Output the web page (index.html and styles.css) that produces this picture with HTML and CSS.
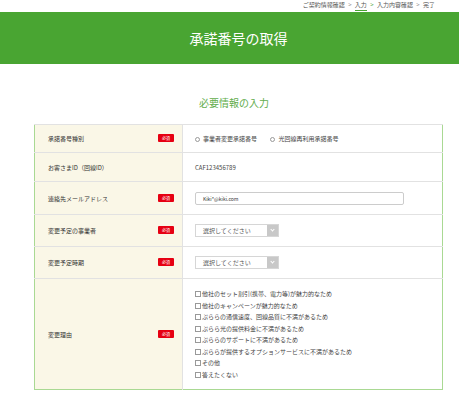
FILE: index.html
```html
<!DOCTYPE html>
<html lang="ja">
<head>
    <meta charset="UTF-8">
    <meta name="viewport" content="width=device-width, initial-scale=1.0">
    <title>承諾番号の取得</title>
    <link rel="stylesheet" href="styles.css">
</head>
<body>
    <div class="breadcrumb">
        <span>ご契約情報確認</span>
        <span class="sep">&gt;</span>
        <span class="current">入力</span>
        <span class="sep green">&gt;</span>
        <span>入力内容確認</span>
        <span class="sep">&gt;</span>
        <span>完了</span>
    </div>
    <div class="page-header">
        <h1>承諾番号の取得</h1>
    </div>
    <h2 class="section-title">必要情報の入力</h2>

    <table class="form-table">
        <tr class="row-type">
            <th><span class="label">承諾番号種別</span><span class="required">必須</span></th>
            <td>
                <span class="radio"><i></i>事業者変更承諾番号</span>
                <span class="radio"><i></i>光回線再利用承諾番号</span>
            </td>
        </tr>
        <tr class="row-id">
            <th><span class="label">お客さまID（回線ID）</span></th>
            <td>CAF123456789</td>
        </tr>
        <tr class="row-mail">
            <th><span class="label">連絡先メールアドレス</span><span class="required">必須</span></th>
            <td><div class="text-input">Kiki*@kiki.com</div></td>
        </tr>
        <tr class="row-select">
            <th><span class="label">変更予定の事業者</span><span class="required">必須</span></th>
            <td><div class="select">選択してください<span class="arrow"></span></div></td>
        </tr>
        <tr class="row-select">
            <th><span class="label">変更予定時期</span><span class="required">必須</span></th>
            <td><div class="select">選択してください<span class="arrow"></span></div></td>
        </tr>
        <tr class="row-reason">
            <th><span class="label">変更理由</span><span class="required">必須</span></th>
            <td>
                <ul class="checks">
                    <li><i></i>他社のセット割引(携帯、電力等)が魅力的なため</li>
                    <li><i></i>他社のキャンペーンが魅力的なため</li>
                    <li><i></i>ぷららの通信速度、回線品質に不満があるため</li>
                    <li><i></i>ぷらら光の提供料金に不満があるため</li>
                    <li><i></i>ぷららのサポートに不満があるため</li>
                    <li><i></i>ぷららが提供するオプションサービスに不満があるため</li>
                    <li><i></i>その他</li>
                    <li><i></i>答えたくない</li>
                </ul>
            </td>
        </tr>
    </table>
</body>
</html>
```

FILE: styles.css
```css
body {
    margin: 0;
    overflow: hidden;
    background: #fff;
    color: #444;
    font-family: "Noto Sans CJK JP", "Noto Sans", sans-serif;
}
.breadcrumb {
    height: 12px;
    padding-right: 24px;
    text-align: right;
    font-size: 6px;
    line-height: 9px;
    color: #555;
}
.breadcrumb .sep {
    margin: 0 2px;
    color: #888;
}
.breadcrumb .sep.green {
    color: #49a532;
}
.breadcrumb .current {
    border-bottom: 1px solid #49a532;
    padding-bottom: 1px;
}
.page-header {
    height: 52px;
    padding-left: 18px;
    background: #49a532;
    display: flex;
    align-items: center;
    justify-content: center;
}
.page-header h1 {
    margin: 0;
    color: #fff;
    font-size: 14px;
    font-weight: normal;
}
.section-title {
    margin: 32px 0 14px;
    padding-left: 9px;
    text-align: center;
    font-size: 10px;
    line-height: 14px;
    font-weight: normal;
    color: #62ad4c;
}
.form-table {
    width: 409px;
    margin: 0 0 0 34px;
    border-collapse: collapse;
    border: 1px solid #a9d993;
    font-size: 6px;
}
.form-table th,
.form-table td {
    padding: 0;
    border-top: 1px solid #e2e2e2;
    vertical-align: middle;
    text-align: left;
    font-weight: normal;
}
.form-table th {
    width: 147px;
    background: #faf7e7;
    border-right: 1px solid #e2e2e2;
    color: #333;
}
.form-table th .label {
    padding-left: 13px;
}
.form-table td {
    padding-left: 12px;
    color: #444;
}
.required {
    float: right;
    margin-right: 8px;
    width: 16px;
    height: 8px;
    line-height: 8px;
    background: #e60012;
    color: #fff;
    font-size: 4px;
    text-align: center;
    border-radius: 1px;
}
.row-type { height: 28px; }
.row-id { height: 29px; }
.row-mail { height: 33px; }
.row-select { height: 32px; }
.row-reason { height: 111px; }
.radio {
    margin-right: 12px;
}
.radio i {
    display: inline-block;
    width: 3px;
    height: 3px;
    margin-right: 3px;
    border: 1px solid #999;
    border-radius: 50%;
    vertical-align: middle;
}
.text-input {
    width: 200px;
    height: 11px;
    line-height: 11px;
    padding-left: 7px;
    border: 1px solid #ccc;
    border-radius: 2px;
    font-size: 5px;
    color: #333;
}
.select {
    position: relative;
    width: 75px;
    height: 11px;
    line-height: 11px;
    padding-left: 7px;
    border: 1px solid #d6d6d6;
    color: #555;
}
.select .arrow {
    position: absolute;
    right: 0;
    top: 0;
    width: 11px;
    height: 11px;
    background: #c8c8c8;
}
.select .arrow::after {
    content: "";
    position: absolute;
    left: 4px;
    top: 3px;
    width: 2px;
    height: 2px;
    border-right: 1px solid #fff;
    border-bottom: 1px solid #fff;
    transform: rotate(45deg);
}
.checks {
    list-style: none;
    margin: 0;
    padding: 0;
}
.checks li {
    height: 11.5px;
    line-height: 11.5px;
}
.checks li i {
    display: inline-block;
    width: 4px;
    height: 4px;
    margin-right: 1px;
    border: 1px solid #999;
    vertical-align: middle;
}
```
